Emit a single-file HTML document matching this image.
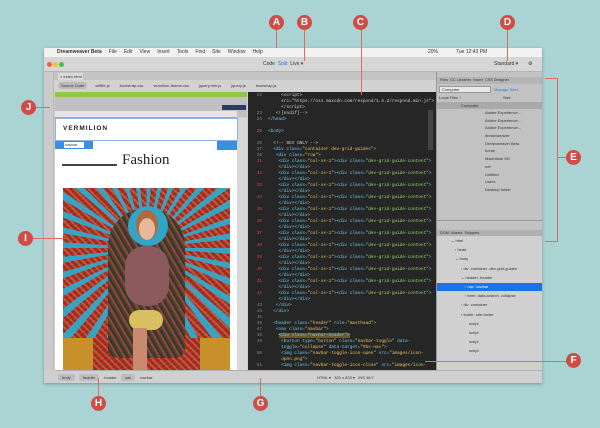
<!DOCTYPE html>
<html><head><meta charset="utf-8"><style>
*{margin:0;padding:0;box-sizing:border-box}
body{width:600px;height:428px;background:#aad3d4;position:relative;overflow:hidden;font-family:"Liberation Sans",sans-serif;font-size:5px;color:#333}
.a{position:absolute}
.c{position:absolute;width:15px;height:15px;border-radius:50%;background:#d24c47;color:#fff;font-weight:bold;font-size:10px;text-align:center;line-height:15px}
.l{position:absolute;background:#e06b66}
.code div{height:6px;line-height:6px;font-family:"Liberation Mono",monospace;font-size:4.4px;white-space:nowrap;color:#6dc9e8}
.ln{display:inline-block;width:14px;text-align:right;color:#888;margin-right:6px}
.g{color:#9bd36b}.y{color:#e8c46b}.w{color:#ccc}
.m span{margin-right:7px}
.f div{height:7.7px;line-height:7.7px;padding-left:48px;white-space:nowrap}
.p{background:#bdbdbd;padding:1px 4px;border-radius:2px;margin-right:4px}
</style></head><body>
<div class="a" style="left:44px;top:48px;width:498px;height:335px;background:#cfcfcf;box-shadow:0 1px 3px rgba(0,0,0,.3)"></div>
<div class="a m" style="left:44px;top:48px;width:498px;height:9px;background:#f2f2f2;font-size:5px;line-height:9px;padding-left:6px;white-space:nowrap">
<span></span><span><b>Dreamweaver Beta</b></span><span>File</span><span>Edit</span><span>View</span><span>Insert</span><span>Tools</span><span>Find</span><span>Site</span><span>Window</span><span>Help</span>
<b style="position:absolute;left:384px;font-weight:normal">20%</b><b style="position:absolute;left:412px;font-weight:normal">Tue 12:43 PM</b></div>
<div class="a" style="left:44px;top:57px;width:498px;height:15px;background:#d6d6d6;border-bottom:1px solid #b5b5b5"></div>
<div class="a" style="left:47px;top:62px;width:5px;height:5px;border-radius:50%;background:#f25c54"></div>
<div class="a" style="left:53px;top:62px;width:5px;height:5px;border-radius:50%;background:#f6bd2f"></div>
<div class="a" style="left:59px;top:62px;width:5px;height:5px;border-radius:50%;background:#3fc446"></div>
<div class="a" style="left:263px;top:61px;font-size:5px;white-space:nowrap">Code &nbsp;<span style="color:#2a7ee0">Split</span> &nbsp;Live ▾</div>
<div class="a" style="left:494px;top:61px;font-size:5px">Standard ▾</div>
<div class="a" style="left:528px;top:61px;font-size:5px">⚙</div>
<div class="a" style="left:54px;top:72px;width:382px;height:8px;background:#c4c4c4"></div>
<div class="a" style="left:58px;top:73px;width:25px;height:7px;background:#dadada;font-size:4px;line-height:7px;padding-left:2px">× index.html</div>
<div class="a" style="left:54px;top:80px;width:382px;height:12px;background:#d2d2d2;font-size:4px;line-height:12px;white-space:nowrap;padding-left:4px"><span style="background:#bbb;padding:1px 3px;border-radius:3px;margin-right:8px">Source Code</span><span style="margin-right:10px">wtflife.js</span><span style="margin-right:10px">bootstrap.css</span><span style="margin-right:10px">vermilion-theme.css</span><span style="margin-right:10px">jquery.min.js</span><span style="margin-right:10px">jquery.js</span><span>bootstrap.js</span></div>
<div class="a" style="left:44px;top:72px;width:10px;height:298px;background:#cbcbcb;border-right:1px solid #b8b8b8"></div>
<div class="a" style="left:55px;top:92px;width:192px;height:5px;background:#8fc940"></div>
<div class="a" style="left:55px;top:97px;width:192px;height:20px;background:#c0c0c0"></div>
<div class="a" style="left:55px;top:111px;width:182px;height:7px;background:#e4e4e4;border-bottom:1px solid #aaa"></div>
<div class="a" style="left:222px;top:105px;width:24px;height:5px;background:#2b3a6b"></div>
<div class="a" style="left:55px;top:118px;width:183px;height:252px;background:#fff"></div>
<div class="a" style="left:237px;top:118px;width:10px;height:252px;background:#d8d8d8"></div>
<div class="a" style="left:55px;top:118px;width:183px;height:23px;border:1px solid #8ab4e0"></div>
<div class="a" style="left:63px;top:125px;font-size:6.5px;font-weight:bold;letter-spacing:1px;color:#222">VERMILION</div>
<div class="a" style="left:55px;top:141px;width:38px;height:8px;background:#3b8ee0"></div>
<div class="a" style="left:64px;top:142px;width:20px;height:6px;background:#fff;font-size:4px;line-height:6px">.navbar</div>
<div class="a" style="left:217px;top:141px;width:20px;height:9px;background:#3b8ee0"></div>
<div class="a" style="left:62px;top:164px;width:55px;height:1.5px;background:#444"></div>
<div class="a" style="left:122px;top:152px;font-family:'Liberation Serif',serif;font-size:15px;color:#222">Fashion</div>
<!-- photo -->
<div class="a" style="left:63px;top:188px;width:167px;height:182px;overflow:hidden;background:
repeating-linear-gradient(45deg,rgba(255,220,120,.25) 0 2px,transparent 2px 5px),
repeating-linear-gradient(-30deg,rgba(30,60,20,.35) 0 1px,transparent 1px 4px),
#b22a26">
<div class="a" style="left:0;top:0;width:167px;height:150px;background:repeating-conic-gradient(from 0deg at 50% 40%,rgba(42,175,210,.9) 0 4deg,transparent 4deg 10deg);-webkit-mask:radial-gradient(circle at 50% 40%,transparent 30px,#000 31px);mask:radial-gradient(circle at 50% 40%,transparent 30px,#000 31px)"></div>
<div class="a" style="left:45px;top:20px;width:77px;height:150px;border-radius:40px 40px 10px 10px;background:repeating-linear-gradient(60deg,#5a3a2a 0 2px,#8a4a40 2px 4px,#2e3a2a 4px 6px)"></div>
<div class="a" style="left:65px;top:18px;width:40px;height:40px;border-radius:50%;background:#2fa6c8"></div>
<div class="a" style="left:73px;top:22px;width:22px;height:30px;border-radius:50%;background:#b06a40"></div>
<div class="a" style="left:76px;top:30px;width:16px;height:22px;border-radius:50%;background:#e9b79c"></div>
<div class="a" style="left:62px;top:58px;width:44px;height:60px;border-radius:20px;background:#8a5a5c"></div>
<div class="a" style="left:66px;top:122px;width:34px;height:20px;border-radius:10px;background:#d8c060"></div>
<div class="a" style="left:70px;top:140px;width:14px;height:42px;background:#c98a70"></div>
<div class="a" style="left:0;top:150px;width:30px;height:32px;background:#c8902a"></div>
<div class="a" style="left:137px;top:150px;width:30px;height:32px;background:#c8902a"></div>
</div>
<!-- code -->
<div class="a code" style="left:248px;top:92px;width:188px;height:278px;background:#262626;overflow:hidden;padding-top:1px">
<div><span class="ln">22</span><span class="w">&nbsp;&nbsp;&nbsp;&nbsp;&nbsp;&lt;script&gt;</span></div>
<div><span class="ln"></span><span class="w">&nbsp;&nbsp;&nbsp;&nbsp;&nbsp;src="https://oss.maxcdn.com/respond/1.4.2/respond.min.js"&gt;</span></div>
<div><span class="ln"></span><span class="w">&nbsp;&nbsp;&nbsp;&nbsp;&nbsp;&lt;/script&gt;</span></div>
<div><span class="ln">23</span><span class="w">&nbsp;&nbsp;&nbsp;&lt;![endif]--&gt;</span></div>
<div><span class="ln">24</span>&lt;/head&gt;</div><div></div>
<div><span class="ln">25</span>&lt;body&gt;</div><div></div>
<div><span class="ln">26</span><span class="w">&nbsp;&nbsp;&lt;!-- DEV ONLY --&gt;</span></div>
<div><span class="ln">27</span>&nbsp;&nbsp;&lt;div class=<span class="y">"container dev-grid-guides"</span>&gt;</div>
<div><span class="ln">28</span>&nbsp;&nbsp;&nbsp;&lt;div class=<span class="y">"row"</span>&gt;</div>
<script>
var s='';
for(var i=31;i<=42;i++){s+='<div><span class="ln" style="color:#e04040">'+i+'</span>&nbsp;&nbsp;&nbsp;&nbsp;&lt;div class=<span class="y">"col-xs-1"</span>&gt;&lt;div class=<span class="g">"dev-grid-guide-content"</span>&gt;</div><div><span class="ln"></span>&nbsp;&nbsp;&nbsp;&nbsp;&lt;/div&gt;&lt;/div&gt;</div>';}
document.write(s);
</script>
<div><span class="ln">43</span>&nbsp;&nbsp;&nbsp;&lt;/div&gt;</div>
<div><span class="ln">44</span>&nbsp;&nbsp;&lt;/div&gt;</div>
<div><span class="ln">45</span></div>
<div><span class="ln">46</span>&nbsp;&nbsp;&lt;header class=<span class="y">"header"</span> role=<span class="y">"masthead"</span>&gt;</div>
<div><span class="ln">47</span>&nbsp;&nbsp;&nbsp;&lt;nav class=<span class="y">"navbar"</span>&gt;</div>
<div><span class="ln">48</span>&nbsp;&nbsp;&nbsp;&nbsp;<span style="background:#6b5a2a">&lt;div class="navbar-header"&gt;</span></div>
<div><span class="ln">49</span>&nbsp;&nbsp;&nbsp;&nbsp;&nbsp;&lt;button type=<span class="y">"button"</span> class=<span class="y">"navbar-toggle"</span> data-</div>
<div><span class="ln"></span>&nbsp;&nbsp;&nbsp;&nbsp;&nbsp;toggle=<span class="y">"collapse"</span> data-target=<span class="y">"#bs-nav"</span>&gt;</div>
<div><span class="ln">50</span>&nbsp;&nbsp;&nbsp;&nbsp;&nbsp;&lt;img class=<span class="y">"navbar-toggle-icon-open"</span> src=<span class="y">"images/icon-</span></div>
<div><span class="ln"></span>&nbsp;&nbsp;&nbsp;&nbsp;&nbsp;<span class="y">open.png"</span>&gt;</div>
<div><span class="ln">51</span>&nbsp;&nbsp;&nbsp;&nbsp;&nbsp;&lt;img class=<span class="y">"navbar-toggle-icon-close"</span> src=<span class="y">"images/icon-</span></div>
</div>
<div class="a" style="left:428px;top:110px;width:5px;height:40px;background:#444"></div>
<!-- right panel -->
<div class="a" style="left:436px;top:72px;width:106px;height:298px;background:#c2c2c2;border-left:1px solid #999"></div>
<div class="a" style="left:437px;top:77px;width:105px;height:7px;background:#b5b5b5;font-size:3.8px;line-height:7px;white-space:nowrap;padding-left:3px">Files &nbsp;CC Libraries &nbsp;Insert &nbsp;CSS Designer</div>
<div class="a" style="left:439px;top:86px;width:52px;height:7px;background:#e8e8e8;border:1px solid #999;font-size:4px;line-height:5px;padding-left:2px">Computer</div>
<div class="a" style="left:494px;top:87px;font-size:4px;color:#2a7ee0">Manage Sites</div>
<div class="a" style="left:437px;top:95px;width:105px;height:6px;font-size:4px;padding-left:2px">Local Files ↑<span style="position:absolute;left:66px">Size</span></div>
<div class="a" style="left:437px;top:102px;width:105px;height:7px;background:#a9a9a9;font-size:4px;line-height:7px;padding-left:24px">Computer</div>
<div class="a f" style="left:437px;top:109px;width:105px;font-size:4px">
<div>Adobe Experience...</div><div>Adobe Experience...</div><div>Adobe Experience...</div><div>dreamweaver</div><div>Dreamweaver Beta</div><div>home</div><div>Macintosh HD</div><div>net</div><div>Untitled</div><div>Users</div><div>Desktop folder</div>
</div>
<div class="a" style="left:437px;top:220px;width:105px;height:1px;background:#999"></div>
<div class="a" style="left:437px;top:230px;width:105px;height:6px;background:#b0b0b0;font-size:3.8px;line-height:6px;padding-left:3px">DOM &nbsp;Assets &nbsp;Snippets</div>
<div class="a" style="left:437px;top:236px;width:105px;height:134px;background:#d0d0d0"></div>
<div class="a" style="left:437px;top:283px;width:105px;height:8px;background:#1a73e8"></div>
<div class="a" style="left:437px;top:236px;width:105px;font-size:4px;line-height:9.2px">
<div style="padding-left:14px">⌄ html</div><div style="padding-left:18px">› head</div><div style="padding-left:18px">⌄ body</div>
<div style="padding-left:24px">› div .container .dev-grid-guides</div><div style="padding-left:24px">⌄ header .header</div>
<div style="padding-left:28px;color:#fff">› nav .navbar</div><div style="padding-left:28px">› form .data-search .collapse</div>
<div style="padding-left:24px">› div .container</div><div style="padding-left:24px">› footer .site-footer</div>
<div style="padding-left:32px">script</div><div style="padding-left:32px">script</div><div style="padding-left:32px">script</div><div style="padding-left:32px">script</div></div>
<!-- status -->
<div class="a" style="left:55px;top:370px;width:487px;height:13px;background:#d0d0d0;border-top:1px solid #b0b0b0;font-size:4px;line-height:13px;white-space:nowrap;padding-left:3px"><span class="p">body</span><span class="p">header</span><span style="margin-right:4px">.header</span><span class="p">nav</span><span>.navbar</span><span style="position:absolute;left:262px">HTML ▾ &nbsp; 320 x 833 ▾ &nbsp; INS 48:7</span></div>
<!-- annotations -->
<div class="l" style="left:276px;top:29px;width:1px;height:19px"></div>
<div class="l" style="left:304px;top:29px;width:1px;height:32px"></div>
<div class="l" style="left:361px;top:29px;width:1px;height:66px"></div>
<div class="l" style="left:507px;top:29px;width:1px;height:32px"></div>
<div class="l" style="left:545px;top:78px;width:13px;height:1px"></div>
<div class="l" style="left:557px;top:78px;width:1px;height:164px"></div>
<div class="l" style="left:545px;top:241px;width:13px;height:1px"></div>
<div class="l" style="left:557px;top:157px;width:10px;height:1px"></div>
<div class="l" style="left:425px;top:361px;width:143px;height:1px"></div>
<div class="l" style="left:260px;top:378px;width:1px;height:18px"></div>
<div class="l" style="left:98px;top:378px;width:1px;height:18px"></div>
<div class="l" style="left:33px;top:238px;width:32px;height:1px"></div>
<div class="l" style="left:35px;top:107px;width:15px;height:1px"></div>
<div class="c" style="left:269px;top:15px">A</div>
<div class="c" style="left:297px;top:15px">B</div>
<div class="c" style="left:353px;top:15px">C</div>
<div class="c" style="left:500px;top:15px">D</div>
<div class="c" style="left:566px;top:150px">E</div>
<div class="c" style="left:566px;top:353px">F</div>
<div class="c" style="left:253px;top:396px">G</div>
<div class="c" style="left:91px;top:396px">H</div>
<div class="c" style="left:18px;top:231px">I</div>
<div class="c" style="left:21px;top:100px">J</div>
</body></html>
